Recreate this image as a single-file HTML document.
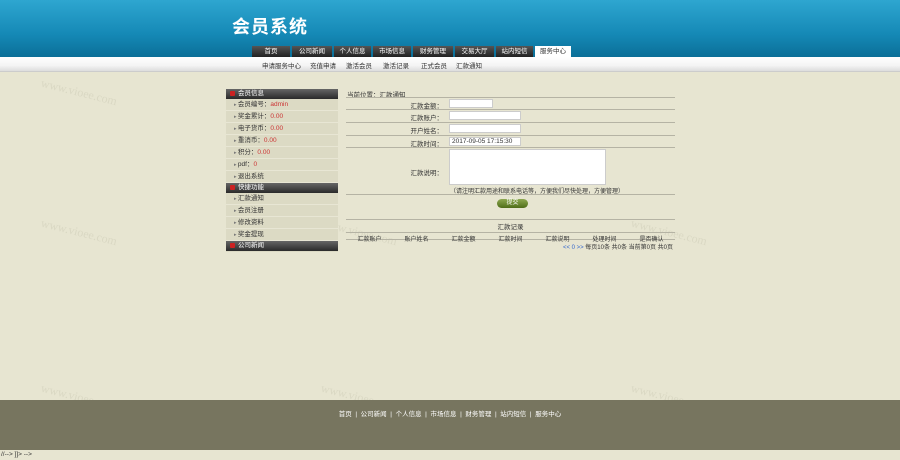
<!DOCTYPE html>
<html><head><meta charset="utf-8"><style>
*{margin:0;padding:0;box-sizing:border-box}
body{width:900px;height:460px;overflow:hidden;background:#e7e5d1;font-family:"Liberation Sans","Noto Sans CJK SC",sans-serif;font-size:7px;color:#333;position:relative}
.hdr{position:absolute;left:0;top:0;width:900px;height:57px;background:linear-gradient(#2ea6d0,#1589b6 60%,#0b6f98)}
.logo{position:absolute;left:232px;top:13px;color:#fff;font-size:18px;font-weight:bold;letter-spacing:1px}
.nav{position:absolute;top:46px;left:252px;height:11px;display:flex}
.nav div{height:11px;background:linear-gradient(#555,#222);color:#fff;font-size:6.5px;line-height:11px;text-align:center;margin-right:2px}
.nav div.on{background:#fff;color:#333}
.sub{position:absolute;top:57px;left:0;width:900px;height:15px;background:linear-gradient(#fff,#f4f4f4 60%,#ddd);border-bottom:1px solid #ccc}
.sub span{position:absolute;top:3px;font-size:6.5px;color:#333}
.side{position:absolute;left:226px;top:89px;width:112px;height:163px;background:#dcdac4}
.sh{height:10px;background:linear-gradient(#666,#2a2a2a);color:#fff;font-size:6.5px;line-height:10px;padding-left:12px;position:relative}
.sh:before{content:"";position:absolute;left:4px;top:2px;width:5px;height:5px;background:#c22;border-radius:1px}
.si{height:12px;line-height:12px;padding-left:8px;font-size:6.5px;border-bottom:1px solid #e8e6d4}
.si:before{content:"▸ ";color:#777;font-size:5px}
.si b{color:#c33;font-weight:normal}
.main{position:absolute;left:346px;top:89px;width:329px}
.row{position:absolute;left:0;width:329px;border-bottom:1px solid #b5b3a4}
.lab{position:absolute;right:232px;font-size:6.5px}
.inp{position:absolute;background:#fff;border:1px solid #ccc;height:9px;font-size:6.5px;line-height:8px;padding-left:2px}
.foot{position:absolute;left:0;top:400px;width:900px;height:50px;background:#77755f}
.foot div{position:absolute;top:8px;left:0;width:900px;text-align:center;color:#fff;font-size:6.5px}
.wm{position:absolute;color:rgba(120,120,100,.12);font-size:12px;font-family:"Liberation Serif",serif;transform:rotate(14deg)}
</style></head><body>
<div class="hdr"><div class="logo">会员系统</div>
<div class="nav">
<div style="width:38px">首页</div><div style="width:40px">公司新闻</div><div style="width:37px">个人信息</div><div style="width:38px">市场信息</div><div style="width:40px">财务管理</div><div style="width:39px">交易大厅</div><div style="width:37px">站内短信</div><div class="on" style="width:36px">服务中心</div>
</div></div>
<div class="sub">
<span style="left:262px">申请服务中心</span><span style="left:310px">充值申请</span><span style="left:346px">激活会员</span><span style="left:383px">激活记录</span><span style="left:421px">正式会员</span><span style="left:456px">汇款通知</span>
</div>
<div class="wm" style="left:40px;top:85px">www.vioee.com</div>
<div class="wm" style="left:320px;top:225px">www.vioee.com</div>
<div class="wm" style="left:630px;top:225px">www.vioee.com</div>
<div class="wm" style="left:40px;top:225px">www.vioee.com</div>
<div class="wm" style="left:320px;top:390px">www.vioee.com</div>
<div class="wm" style="left:630px;top:390px">www.vioee.com</div>
<div class="wm" style="left:40px;top:390px">www.vioee.com</div>
<div class="side">
<div class="sh">会员信息</div>
<div class="si">会员编号：<b>admin</b></div>
<div class="si">奖金累计：<b>0.00</b></div>
<div class="si">电子货币：<b>0.00</b></div>
<div class="si">重消币：<b>0.00</b></div>
<div class="si">积分：<b>0.00</b></div>
<div class="si">pdf：<b>0</b></div>
<div class="si">退出系统</div>
<div class="sh">快捷功能</div>
<div class="si">汇款通知</div>
<div class="si">会员注册</div>
<div class="si">修改资料</div>
<div class="si">奖金提现</div>
<div class="sh">公司新闻</div>
</div>
<div class="main">
<div style="font-size:6.5px;position:absolute;top:0;left:1px">当前位置：汇款通知</div>
<div class="row" style="top:8px;height:13px;border-top:1px solid #b5b3a4"><span class="lab" style="top:2px">汇款金额：</span><div class="inp" style="left:103px;top:1px;width:44px"></div></div>
<div class="row" style="top:21px;height:13px"><span class="lab" style="top:2px">汇款账户：</span><div class="inp" style="left:103px;top:1px;width:72px"></div></div>
<div class="row" style="top:34px;height:13px"><span class="lab" style="top:2px">开户姓名：</span><div class="inp" style="left:103px;top:1px;width:72px"></div></div>
<div class="row" style="top:47px;height:12px"><span class="lab" style="top:2px">汇款时间：</span><div class="inp" style="left:103px;top:1px;width:72px">2017-09-05 17:15:30</div></div>
<div class="row" style="top:59px;height:47px"><span class="lab" style="top:19px">汇款说明：</span><div class="inp" style="left:103px;top:1px;width:157px;height:36px"></div><span style="position:absolute;left:104px;top:38px;font-size:6px">（请注明汇款用途和联系电话等，方便我们尽快处理，方便管理）</span></div>
<div style="position:absolute;left:151px;top:110px;width:31px;height:9px;border-radius:5px;background:linear-gradient(#8da850,#4f6d18);color:#fff;font-size:6px;text-align:center;line-height:9px">提交</div>
<div class="row" style="top:130px;height:21px;border-top:1px solid #b5b3a4"><div style="text-align:center;font-size:6.5px;margin-top:1px">汇款记录</div>
<div style="display:flex;font-size:6px;justify-content:space-around;border-top:1px solid #b5b3a4;margin-top:1px;padding-top:1px"><span>汇款账户</span><span>账户姓名</span><span>汇款金额</span><span>汇款时间</span><span>汇款说明</span><span>处理时间</span><span>是否确认</span></div></div>
<div style="position:absolute;right:2px;top:153px;font-size:6px"><span style="color:#36c">&lt;&lt; 0 &gt;&gt;</span> 每页10条 共0条 当前第0页 共0页</div>
</div>
<div class="foot"><div>首页 &nbsp;| &nbsp;公司新闻 &nbsp;| &nbsp;个人信息 &nbsp;| &nbsp;市场信息 &nbsp;| &nbsp;财务管理 &nbsp;| &nbsp;站内短信 &nbsp;| &nbsp;服务中心</div></div>
<div style="position:absolute;left:1px;top:451px;font-size:6.5px;color:#333">//--&gt; ]]&gt; --&gt;</div>
</body></html>
